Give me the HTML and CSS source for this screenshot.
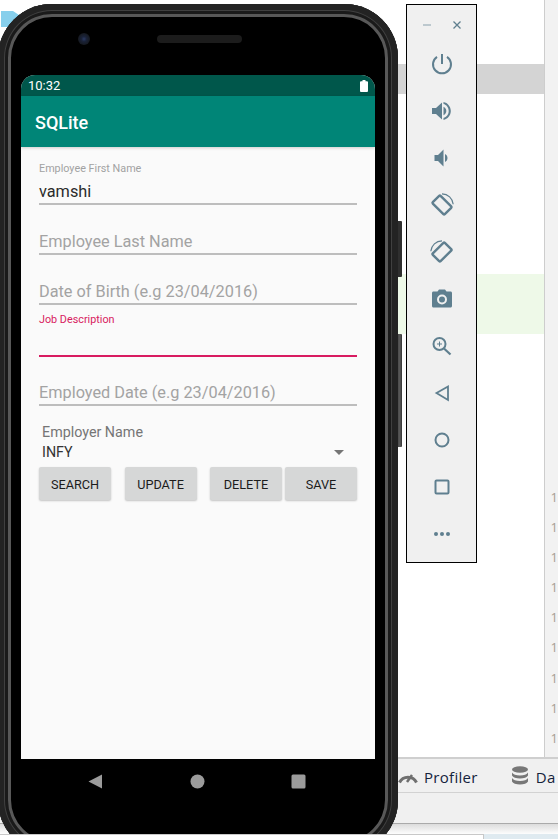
FILE: index.html
```html
<!DOCTYPE html>
<html lang="en">
<head>
  <meta charset="UTF-8">
  <title>SQLite emulator</title>
  <link rel="stylesheet" href="styles.css">
</head>
<body>
  <div class="desk">

    <!-- ide window behind the emulator -->
    <div class="ide">
      <div class="folder-tip"></div>
      <div class="editor">
        <div class="code">
          <div class="band-grey"></div>
          <div class="band-green"></div>
        </div>
        <div class="gutter">
          <span>1</span><span>1</span><span>1</span>
          <span>1</span><span>1</span><span>1</span>
          <span>1</span><span>1</span><span>1</span>
        </div>
      </div>
      <div class="tabs">
        <svg class="tab-gauge" width="24" height="16" viewBox="0 0 24 16">
          <path d="M3.500 14.500a9.500 9.500 0 0 1 17 0" fill="none" stroke="#6f6f6f" stroke-width="3"/>
          <path d="M11 14l5-7" stroke="#6f6f6f" stroke-width="2.500"/>
        </svg>
        <span class="tab-label">Profiler</span>
        <svg class="tab-db" width="18" height="19" viewBox="0 0 18 19">
          <ellipse cx="9" cy="3.500" rx="8" ry="3.200" fill="#777"/>
          <path d="M1 6.500c1 2 4 3 8 3s7-1 8-3v3c-1 2-4 3-8 3s-7-1-8-3z" fill="#777"/>
          <path d="M1 12c1 2 4 3 8 3s7-1 8-3v3.500c-1 2-4 3-8 3s-7-1-8-3z" fill="#777"/>
        </svg>
        <span class="tab-label">Da</span>
      </div>
      <div class="statusbar"></div>
      <div class="shadow-strip"></div>
      <div class="taskbar">
        <div class="taskbar-white"></div>
        <div class="taskbar-blue"></div>
      </div>
    </div>

    <!-- phone -->
    <div class="phone-clip">
      <div class="side-btn side-power"></div>
      <div class="side-btn side-volume"></div>
      <div class="phone">
        <div class="bezel-top">
          <div class="camera"></div>
          <div class="speaker"></div>
        </div>
        <div class="screen">
          <div class="status">
            <span class="clock">10:32</span>
            <svg width="8" height="12" viewBox="0 0 8 12">
              <path d="M2.500 0h3v1.200H7a1 1 0 0 1 1 1V11a1 1 0 0 1-1 1H1a1 1 0 0 1-1-1V2.200a1 1 0 0 1 1-1h1.500z" fill="#fff"/>
            </svg>
          </div>
          <div class="appbar">SQLite</div>
          <div class="form">
            <div class="field">
              <label class="float">Employee First Name</label>
              <div class="line value">vamshi</div>
            </div>
            <div class="field">
              <div class="line hint">Employee Last Name</div>
            </div>
            <div class="field">
              <div class="line hint">Date of Birth (e.g 23/04/2016)</div>
            </div>
            <div class="field field-focus">
              <label class="float">Job Description</label>
              <div class="line"></div>
            </div>
            <div class="field field-short">
              <div class="line hint">Employed Date (e.g 23/04/2016)</div>
            </div>
            <div class="employer">Employer Name</div>
            <div class="spinner">
              <span>INFY</span>
              <span class="arrow"></span>
            </div>
            <div class="buttons">
              <div class="btn-group">
                <div class="btn">SEARCH</div>
                <div class="btn">UPDATE</div>
                <div class="btn">DELETE</div>
              </div>
              <div class="btn">SAVE</div>
            </div>
          </div>
        </div>
        <div class="nav">
          <svg width="15" height="15" viewBox="0 0 15 15"><path d="M14 0.500v14L0.500 7.500z" fill="#9b9b9b"/></svg>
          <svg width="15" height="15" viewBox="0 0 15 15"><circle cx="7.500" cy="7.500" r="7" fill="#9b9b9b"/></svg>
          <svg width="15" height="15" viewBox="0 0 15 15"><rect x="0.500" y="0.500" width="14" height="14" rx="1.500" fill="#9b9b9b"/></svg>
        </div>
      </div>
    </div>

    <!-- emulator side toolbar -->
    <div class="toolbar">
      <div class="toolbar-head">
        <svg width="12" height="12" viewBox="0 0 12 12"><path d="M2 6h8" stroke="#9fb2bb" stroke-width="1.300"/></svg>
        <svg width="12" height="12" viewBox="0 0 12 12"><path d="M2.500 2.500l7 7M9.500 2.500l-7 7" stroke="#5f7f8f" stroke-width="1.300"/></svg>
      </div>
      <svg class="tool" viewBox="0 0 24 24"><path d="M12 2v10M7 4.800a9 9 0 1 0 10 0" fill="none" stroke-width="2"/></svg>
      <svg class="tool tool-fill" viewBox="0 0 24 24"><path d="M2 9v6h4l6 5.500V3.500L6 9zM13.500 7.800v8.400c1.700-.7 2.800-2.300 2.800-4.200s-1.100-3.500-2.800-4.200zM13.500 3v2.100c3 .7 5.200 3.500 5.200 6.900s-2.200 6.200-5.200 6.900V21c4.100-.8 7.300-4.600 7.300-9s-3.200-8.200-7.300-9z"/></svg>
      <svg class="tool tool-fill" viewBox="0 0 24 24"><path d="M4.500 9v6h3.500l5.500 5.500V3.500L8 9zM15 8v8c1.500-.7 2.500-2.200 2.500-4s-1-3.300-2.500-4z"/></svg>
      <svg class="tool" viewBox="0 0 24 24">
        <rect x="3.500" y="6.500" width="17" height="11" rx="1" fill="none" stroke-width="2.400" transform="rotate(45 12 12)"/>
        <path d="M12 .8a11.500 11.500 0 0 1 11.200 10.500" fill="none" stroke-width="1.200"/>
      </svg>
      <svg class="tool" viewBox="0 0 24 24">
        <g transform="matrix(-1 0 0 1 24 0)">
          <rect x="3.500" y="6.500" width="17" height="11" rx="1" fill="none" stroke-width="2.400" transform="rotate(45 12 12)"/>
          <path d="M12 .8a11.500 11.500 0 0 1 11.200 10.500" fill="none" stroke-width="1.200"/>
        </g>
      </svg>
      <svg class="tool tool-fill" viewBox="0 0 24 24">
        <path d="M9 2.500L7.500 4.500H3.500C2.600 4.500 2 5.200 2 6v13c0 .9.600 1.500 1.500 1.500h17c.9 0 1.500-.6 1.500-1.500V6c0-.8-.6-1.500-1.500-1.500h-4L15 2.500z"/>
        <circle cx="12" cy="12.500" r="4" stroke="#f0f0f0" stroke-width="2"/>
      </svg>
      <svg class="tool" viewBox="0 0 24 24">
        <circle cx="9.500" cy="10" r="6" fill="none" stroke-width="2"/>
        <path d="M14 14.500l6.500 6" fill="none" stroke-width="2.200"/>
        <path d="M9.500 7.500v5M7 10h5" fill="none" stroke-width="1"/>
      </svg>
      <svg class="tool" viewBox="0 0 24 24"><path d="M18 5.500L6.500 12 18 19z" fill="none" stroke-width="1.800"/></svg>
      <svg class="tool" viewBox="0 0 24 24"><circle cx="12" cy="12" r="6.500" fill="none" stroke-width="2"/></svg>
      <svg class="tool" viewBox="0 0 24 24"><rect x="5.500" y="5.500" width="13" height="13" rx="1" fill="none" stroke-width="2"/></svg>
      <svg class="tool tool-fill" viewBox="0 0 24 24">
        <circle cx="6" cy="12" r="2"/><circle cx="12" cy="12" r="2"/><circle cx="18" cy="12" r="2"/>
      </svg>
    </div>

  </div>
</body>
</html>
```

FILE: styles.css
```css
html, body {
  margin: 0;
  padding: 0;
  background: #fff;
}

.desk {
  position: relative;
  width: 558px;
  height: 839px;
  overflow: hidden;
  font-family: Roboto, sans-serif;
}

/* ide behind */
.ide {
  position: absolute;
  inset: 0;
  display: flex;
  flex-direction: column;
}

.folder-tip {
  position: absolute;
  left: 1px;
  top: 11px;
  width: 24px;
  height: 16px;
  background: #87cfec;
  clip-path: polygon(0 0, 50% 0, 75% 25%, 100% 25%, 100% 100%, 0 100%);
}

.editor {
  display: flex;
  height: 757px;
  border-bottom: 2px solid #cfcfcf;
}

.code {
  flex: 1;
  padding-top: 64px;
  background: #fff;
}

.band-grey {
  height: 30px;
  background: #d4d4d4;
}

.band-green {
  height: 60px;
  margin-top: 180px;
  background: #eef9e8;
}

.gutter {
  width: 13px;
  box-sizing: content-box;
  border-left: 1px solid #cdcdcd;
  background: #f2f2f2;
  padding-top: 482px;
  display: flex;
  flex-direction: column;
  align-items: flex-end;
  font-family: "Open Sans", sans-serif;
  font-size: 13px;
  line-height: 30.100px;
  color: #a89f92;
}

.tabs {
  display: flex;
  align-items: center;
  height: 33px;
  padding-left: 396px;
  background: #f0f0f0;
  border-bottom: 1px solid #d2d2d2;
  white-space: nowrap;
}

.tab-label {
  font-family: "Open Sans", sans-serif;
  font-size: 15px;
  letter-spacing: .3px;
  color: #14233c;
  padding-top: 2px;
}

.tab-gauge {
  margin-right: 4px;
  flex: none;
}

.tab-db {
  margin-left: 33px;
  margin-right: 7px;
  flex: none;
}

.statusbar {
  height: 30px;
  background: #f0f0f0;
  border-bottom: 1px solid #aaa;
}

.shadow-strip {
  height: 10px;
  background: linear-gradient(#dcdcdc, #fdfdfd);
}

.taskbar {
  flex: 1;
  display: flex;
}

.taskbar-white {
  width: 483px;
  background: #fff;
  border-top: 1px solid #c8c8c8;
  border-right: 1px solid #c8c8c8;
}

.taskbar-blue {
  flex: 1;
  background: #dfeaf0;
}

/* phone */
.phone-clip {
  position: absolute;
  left: -2px;
  top: 4px;
  width: 406px;
  height: 830px;
  overflow: hidden;
}

.phone {
  width: 400px;
  height: 850px;
  border-radius: 54px;
  background: #000;
  box-shadow:
    inset 0 0 0 6px #232323,
    inset 0 0 0 7px #404040,
    inset 0 0 0 10px #1a1a1a,
    inset 0 0 0 13px #585858;
  position: relative;
  display: flex;
  flex-direction: column;
  align-items: stretch;
}

.side-btn {
  position: absolute;
  left: 400px;
  width: 4px;
  border-radius: 0 1px 1px 0;
  z-index: 1;
}

.side-power {
  top: 217px;
  height: 56px;
  background: #2f2f2f;
}

.side-volume {
  top: 330px;
  height: 113px;
  background: linear-gradient(90deg, #4b4b4b, #5b5b5b 50%, #333);
}

.bezel-top {
  height: 71px;
  box-sizing: border-box;
  padding: 29px 0 0 80px;
  display: flex;
  align-items: flex-start;
  gap: 67px;
}

.camera {
  width: 12px;
  height: 12px;
  border-radius: 50%;
  background: radial-gradient(circle, #2b3a63 0, #1a2238 30%, #161a22 65%, #0d0d0f 100%);
}

.speaker {
  width: 85px;
  height: 8px;
  margin-top: 2px;
  border-radius: 4px;
  background: #1c1c1c;
}

.screen {
  width: 354px;
  height: 684px;
  margin-left: 23px;
  border-radius: 14px 14px 0 0;
  overflow: hidden;
  background: #fafafa;
  flex: none;
}

.status {
  height: 21px;
  background: #00574b;
  color: #fff;
  display: flex;
  align-items: center;
  justify-content: space-between;
  padding: 0 7px;
}

.clock {
  font-size: 13px;
}

.appbar {
  height: 51px;
  line-height: 53px;
  padding-left: 14px;
  background: #008577;
  color: #fff;
  font-size: 18px;
  font-weight: 500;
  box-shadow: 0 1px 3px rgba(0, 0, 0, .18);
}

.form {
  padding: 8px 18px 0;
}

.field {
  height: 50px;
  display: flex;
  flex-direction: column;
  justify-content: flex-end;
}

.field-focus {
  height: 52px;
}

.field-short {
  height: 49px;
}

.float {
  font-size: 10.800px;
  line-height: 13px;
  margin-bottom: 7px;
  color: #a2a2a2;
}

.line {
  height: 20px;
  line-height: 20px;
  padding-bottom: 1px;
  border-bottom: 2px solid #bdbdbd;
  font-size: 16.300px;
}

.value {
  color: #2b2b2b;
}

.hint {
  color: #a3a3a3;
}

.field-focus .float {
  color: #d81b60;
  margin-bottom: 8px;
}

.field-focus .line {
  border-bottom-color: #d81b60;
}

.employer {
  margin-top: 17px;
  padding-left: 3px;
  font-size: 14.300px;
  line-height: 18px;
  color: #757575;
}

.spinner {
  margin-top: 2px;
  padding: 0 13px 0 3px;
  display: flex;
  align-items: center;
  justify-content: space-between;
  font-size: 14.300px;
  line-height: 18px;
  color: #333;
}

.arrow {
  width: 0;
  height: 0;
  border-left: 5px solid transparent;
  border-right: 5px solid transparent;
  border-top: 5px solid #757575;
}

.buttons {
  margin-top: 6px;
  display: flex;
  gap: 3px;
}

.btn-group {
  display: flex;
  gap: 13.500px;
}

.btn {
  width: 72px;
  height: 33px;
  line-height: 35px;
  text-align: center;
  border-radius: 2px;
  background: #d6d7d7;
  box-shadow: 0 1px 2px rgba(0, 0, 0, .22);
  font-size: 12.700px;
  color: #1c1c1c;
}

.nav {
  height: 44px;
  display: flex;
  align-items: center;
  padding-left: 90px;
  gap: 86.500px;
}

/* side toolbar */
.toolbar {
  position: absolute;
  left: 406px;
  top: 4px;
  width: 69px;
  height: 557px;
  border: 1px solid #000;
  background: #f0f0f0;
  display: flex;
  flex-direction: column;
  align-items: center;
  gap: 23px;
}

.toolbar-head {
  display: flex;
  justify-content: center;
  gap: 18px;
  padding-top: 14px;
  margin-bottom: -2px;
}

.tool {
  width: 24px;
  height: 24px;
  flex: none;
  stroke: #5f7f8f;
}

.tool-fill {
  fill: #5f7f8f;
  stroke: none;
}
```
